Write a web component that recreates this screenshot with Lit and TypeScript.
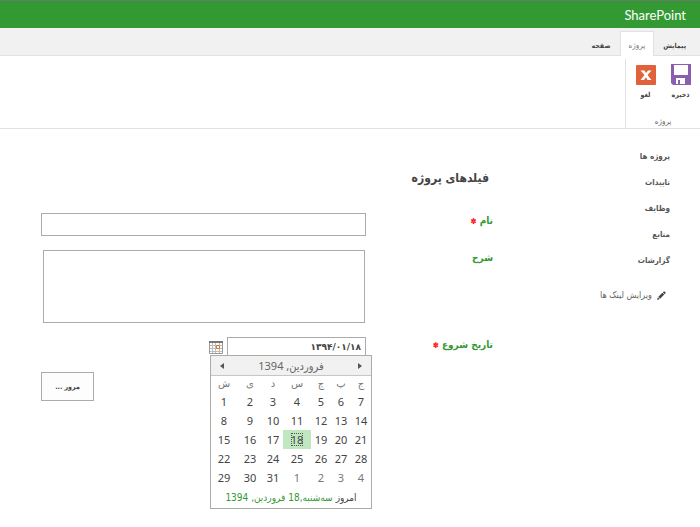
import { LitElement, html, css, svg } from "lit";
import { customElement, state } from "lit/decorators.js";
import { classMap } from "lit/directives/class-map.js";

const NAV = ["پروژه ها", "تاییدات", "وظایف", "منابع", "گزارشات"];
const WEEKDAYS = ["ش", "ی", "د", "س", "چ", "پ", "ج"];
const DAYS_IN_MONTH = 31;

@customElement("date-picker")
export class DatePicker extends LitElement {
  @state() private selected = 18;

  static styles = css`
    :host {
      display: block;
      direction: ltr;
      box-sizing: border-box;
      width: 162px;
      border: 1px solid #ababab;
      background: #fff;
      color: #444;
      font: 11px/19px "Noto Sans", "DejaVu Sans Condensed", "DejaVu Sans", sans-serif;
    }
    .head {
      display: flex;
      align-items: center;
      justify-content: space-between;
      height: 19px;
      padding: 0 9px;
      background: #f1f1f1;
      border-bottom: 1px solid #c6c6c6;
      color: #666;
    }
    button {
      display: flex;
      padding: 0;
      border: 0;
      background: none;
      color: inherit;
      font: inherit;
    }
    .arrow { fill: #555; }
    table {
      width: 100%;
      border-collapse: collapse;
      table-layout: fixed;
    }
    .wide { width: 26px; }
    .mid { width: 28px; }
    th, td {
      padding: 0;
      text-align: center;
      font-weight: normal;
    }
    th {
      height: 16px;
      color: #777;
      font-family: "DejaVu Sans", sans-serif;
      font-size: 10px;
      line-height: 16px;
    }
    td { height: 19px; }
    td button {
      width: 100%;
      height: 19px;
      align-items: center;
      justify-content: center;
      line-height: 13px;
    }
    .other { color: #777; }
    .chosen { background: #c0e8c0; }
    .chosen span { outline: 1px dotted #555; outline-offset: -1px; }
    .today {
      display: flex;
      justify-content: center;
      gap: 3px;
      direction: rtl;
      white-space: nowrap;
      font-family: "DejaVu Sans Condensed", "DejaVu Sans", sans-serif;
      font-size: 10px;
      line-height: 21px;
    }
    .today a { color: #339933; text-decoration: none; }
  `;

  render() {
    const weeks = [0, 1, 2, 3, 4].map((w) => WEEKDAYS.map((_, d) => w * 7 + d + 1));
    return html`
      <div class="head">
        <button aria-label="ماه قبل"><svg class="arrow" width="4" height="6"><path d="M4 0v6L0 3z" /></svg></button>
        <span dir="rtl">فروردین, 1394</span>
        <button aria-label="ماه بعد"><svg class="arrow" width="4" height="6"><path d="M0 0v6l4-3z" /></svg></button>
      </div>
      <table>
        <colgroup>
          <col class="wide" /><col class="wide" /><col /><col class="mid" /><col /><col /><col />
        </colgroup>
        <thead><tr>${WEEKDAYS.map((d) => html`<th scope="col">${d}</th>`)}</tr></thead>
        <tbody>
          ${weeks.map((week) => html`<tr>${week.map((n) => {
            const other = n > DAYS_IN_MONTH;
            return html`<td class=${classMap({ other, chosen: n === this.selected })}>
              <button @click=${() => { if (!other) this.selected = n; }}><span>${other ? n - DAYS_IN_MONTH : n}</span></button>
            </td>`;
          })}</tr>`)}
        </tbody>
      </table>
      <div class="today"><span>امروز</span><a href="#">سه‌شنبه,18 فروردین, 1394</a></div>
    `;
  }
}

@customElement("app-root")
export class AppRoot extends LitElement {
  static styles = css`
    :host {
      display: block;
      min-height: 100vh;
      direction: rtl;
      background: #fff;
      color: #444;
      font: 9px/16px "DejaVu Sans Condensed", "DejaVu Sans", sans-serif;
    }
    a { color: inherit; text-decoration: none; }
    button { font: inherit; color: inherit; cursor: pointer; }
    .suite {
      display: flex;
      align-items: center;
      box-sizing: border-box;
      height: 28px;
      padding: 0 14px;
      border-top: 1px solid #6b7a6b;
      background: #339933;
      color: #fff;
      font: 13px/20px Lato, "Open Sans", sans-serif;
    }
    .tabs {
      display: flex;
      align-items: flex-end;
      box-sizing: border-box;
      height: 28px;
      padding: 0 5px;
      background: #f1f1f1;
      border-bottom: 1px solid #e1e1e1;
      font-size: 7px;
    }
    .tab {
      box-sizing: border-box;
      height: 24px;
      padding: 5px 8px 0;
      border: 1px solid transparent;
      border-bottom: 0;
      margin-bottom: -1px;
      font-weight: bold;
    }
    .tab.active {
      height: 25px;
      padding-top: 6px;
      border-color: #e1e1e1;
      background: #fff;
      color: #777;
      font-size: 8px;
      font-weight: normal;
    }
    .ribbon {
      display: flex;
      box-sizing: border-box;
      height: 73px;
      padding-top: 3px;
      border-bottom: 1px solid #e1e1e1;
      font-size: 8px;
    }
    .group {
      display: flex;
      flex-direction: column;
      justify-content: space-between;
      align-items: center;
      box-sizing: border-box;
      width: 75px;
      padding: 5px 0 0;
      border-left: 1px solid #e1e1e1;
    }
    .actions { display: flex; }
    .action {
      display: flex;
      flex-direction: column;
      align-items: center;
      gap: 2px;
      width: 35px;
      padding: 0;
      border: 0;
      background: none;
      font-size: 7px;
      font-weight: bold;
    }
    .group-name { line-height: 12px; color: #666; }
    .body { display: flex; padding: 16px 30px 0 41px; }
    .side { width: 177px; }
    .links {
      display: flex;
      flex-direction: column;
      gap: 10px;
      margin: 0;
      padding: 4px 0 18px;
      list-style: none;
      color: #555;
      font-size: 8px;
      font-weight: bold;
    }
    .edit { display: flex; align-items: center; gap: 5px; padding-right: 4px; color: #666; }
    main { flex: 1; min-width: 0; }
    h1 {
      margin: 0;
      padding: 21px 4px 0;
      font-size: 12px;
      line-height: 24px;
      font-weight: bold;
    }
    .fields { display: grid; grid-template-columns: 127px 1fr; padding-top: 23px; row-gap: 14px; }
    .label { color: #339933; font-size: 10px; line-height: 16px; font-weight: bold; }
    .star { color: #f00; font-size: 8px; }
    input, textarea {
      display: block;
      box-sizing: border-box;
      width: 100%;
      height: 23px;
      margin: 0;
      padding: 0 4px;
      border: 1px solid #ababab;
      background: #fff;
      color: #444;
      font: bold 9px/16px "DejaVu Sans", sans-serif;
    }
    .area { padding: 0 1px 0 2px; }
    textarea { height: 73px; resize: none; }
    .date { position: relative; display: flex; align-items: center; gap: 4px; height: 20px; }
    .date input { width: 139px; height: 20px; }
    .date button { display: flex; padding: 0; border: 0; background: none; }
    .popup { position: absolute; top: 18px; right: -6px; z-index: 1; }
    .foot { display: flex; justify-content: flex-end; padding: 15px 0 0; }
    .browse {
      width: 53px;
      height: 29px;
      padding: 0;
      border: 1px solid #ababab;
      background: #fdfdfd;
      font-size: 7px;
      font-weight: bold;
    }
  `;

  private calendarIcon() {
    return svg`
      <path fill="#fff" stroke="#999" d="M.5 .5h13v12H.5z" />
      <path fill="#777" d="M0 0h14v2H0z" />
      <path fill="none" stroke="#bbb" d="M3.500 2v10M6.500 2v10M10.500 2v10M1 4.500h12M1 7.500h12M1 10.500h12" />
      <path fill="#fff" stroke="#e87722" d="M7.500 4.500h3v3h-3z" />`;
  }

  render() {
    return html`
      <header>
        <div class="suite">SharePoint</div>
        <nav class="tabs">
          <a class="tab" href="#">پیمایش</a>
          <a class="tab active" href="#">پروژه</a>
          <a class="tab" href="#">صفحه</a>
        </nav>
        <div class="ribbon">
          <div class="group">
            <div class="actions">
              <button class="action">
                <svg width="20" height="21" viewBox="0 0 20 21">
                  <path fill="#8a5fb0" d="M0 0h20v21H2L0 19z" />
                  <path fill="#fff" d="M3 1h14v10H3zM5 14h9v6H9v-4H7v4H5z" />
                </svg>
                <span>ذخیره</span>
              </button>
              <button class="action">
                <svg width="20" height="21" viewBox="0 0 20 21">
                  <rect y="1" width="20" height="20" rx="1" fill="#e0623a" />
                  <path fill="#fff" d="M4.500 6.500h4l1.500 2.500 2-2.500h3.500l-4 4.500 4 5h-4L10 13.200 8 16H4.500l4-5z" />
                </svg>
                <span>لغو</span>
              </button>
            </div>
            <span class="group-name">پروژه</span>
          </div>
        </div>
      </header>
      <div class="body">
        <nav class="side">
          <ul class="links">${NAV.map((n) => html`<li><a href="#">${n}</a></li>`)}</ul>
          <a class="edit" href="#">
            <svg width="9" height="9" viewBox="0 0 10 10">
              <path fill="#444" d="M0 10l1-3 2 2zM1.500 6.500l4.500-4.500 2 2-4.500 4.500zM6.500 1.500l1-1h1l1 1v1l-1 1z" />
            </svg>
            <span>ویرایش لینک ها</span>
          </a>
        </nav>
        <main>
          <h1>فیلدهای پروژه</h1>
          <div class="fields">
            <label class="label" for="name">نام <span class="star">✽</span></label>
            <div><input id="name" type="text" /></div>
            <label class="label" for="about">شرح</label>
            <div class="area"><textarea id="about"></textarea></div>
            <label class="label" for="start">تاریخ شروع <span class="star">✽</span></label>
            <div class="date">
              <input id="start" type="text" value="۱۳۹۴/۰۱/۱۸" />
              <button aria-label="تقویم"><svg width="14" height="13">${this.calendarIcon()}</svg></button>
              <date-picker class="popup"></date-picker>
            </div>
          </div>
          <div class="foot"><button class="browse">مرور ...</button></div>
        </main>
      </div>
    `;
  }
}
